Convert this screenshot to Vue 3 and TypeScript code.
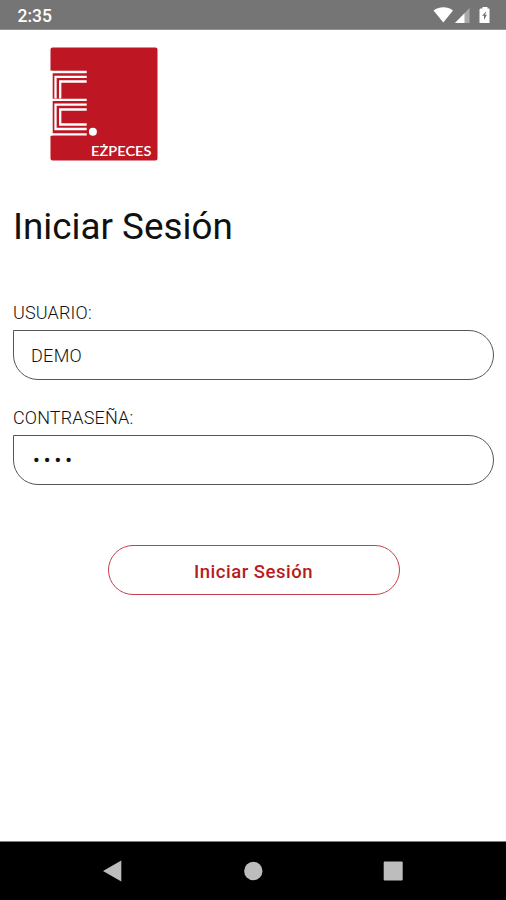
<script setup lang="ts">
import { ref } from 'vue'

const user = ref<string>('DEMO')
const password = ref<string>('••••')
</script>

<template>
  <div class="screen">
    <header class="status">
      <span class="clock">2:35</span>
      <svg class="status-icons" width="60" height="20" viewBox="0 0 60 20">
        <path d="M2.500 5.500C8.500 1.300 16.500 1.300 22 5.500L12.300 17.500Z" fill="#fff" />
        <path d="M38.500 3V18H24Z" fill="#a9a9a9" />
        <path d="M33.500 8.200V18H24Z" fill="#fff" />
        <path d="M49.500 3.500H51.500V2H56.500V3.500H58.500V18H48.500V4.500Z" fill="#fff" />
        <path d="M55.500 6L51 10.800H53V15L56 9.700H54Z" fill="#757575" />
      </svg>
    </header>

    <main class="content">
      <svg class="logo" width="108" height="115" viewBox="50 47 108 115">
        <rect x="50.500" y="47.500" width="107" height="113" rx="2" fill="#be1622" />
        <path d="M50 70.800H52.700V135.600H50Z" fill="#fff" />
        <g fill="none" stroke="#fff" stroke-width="2.300">
          <path d="M50 72H86.700M86.700 76.900H55.500V98.500M86.700 81.500H60.200V98.500" />
          <path d="M50 99.900H86.700M86.700 104.600H55.500V129H86.700M86.700 109.500H60.200V124.500H86.700M50 134.400H86.700" />
        </g>
        <circle cx="92.900" cy="131.700" r="4" fill="#fff" />
        <text class="brand" x="91" y="155.700" textLength="60.500" lengthAdjust="spacingAndGlyphs">EŻPECES</text>
      </svg>

      <h1 class="title">Iniciar Sesión</h1>

      <form class="form" @submit.prevent>
        <label class="label" for="user">USUARIO:</label>
        <input id="user" v-model="user" class="field" type="text" />
        <label class="label second" for="password">CONTRASEÑA:</label>
        <input id="password" v-model="password" class="field secret" type="text" />
        <button class="submit" type="submit">Iniciar Sesión</button>
      </form>
    </main>

    <nav class="navbar">
      <svg width="20" height="22" viewBox="0 0 20 22"><path d="M0 11L18.300 .5V21.500Z" fill="#bdbdbd" /></svg>
      <svg width="20" height="20" viewBox="0 0 20 20"><circle cx="10.300" cy="10" r="9.200" fill="#bdbdbd" /></svg>
      <svg width="20" height="20" viewBox="0 0 20 20"><rect x=".7" y=".5" width="19" height="19" rx="1" fill="#bdbdbd" /></svg>
    </nav>
  </div>
</template>

<style>
body {
  margin: 0;
  background: #fff;
}
</style>

<style scoped>
.screen {
  display: flex;
  flex-direction: column;
  height: 900px;
  box-sizing: border-box;
  background: #fff;
  color: #111;
  font-family: Roboto, "Liberation Sans", sans-serif;
}
.status {
  display: flex;
  justify-content: space-between;
  height: 30px;
  padding: 0 15px 0 17.500px;
  box-sizing: border-box;
  background: #757575;
  border-bottom: 1px solid #929292;
}
.clock {
  color: #fff;
  font-size: 17.500px;
  font-weight: 500;
  line-height: 32px;
}
.status-icons {
  margin-top: 5px;
}
.content {
  flex: 1;
  padding: 17px 12px 0 13px;
}
.logo {
  display: block;
  margin-left: 37px;
}
.brand {
  fill: #fff;
  font-family: Lato, sans-serif;
  font-size: 13px;
  font-weight: 600;
}
.title {
  margin: 41px 0 0;
  font-size: 36.800px;
  font-weight: 400;
  line-height: 48px;
}
.form {
  display: flex;
  flex-direction: column;
  margin-top: 50px;
}
.label {
  font-size: 18px;
  font-weight: 300;
  line-height: 24px;
  letter-spacing: 0.150px;
  margin-bottom: 5px;
}
.second {
  margin-top: 26px;
}
.field {
  height: 50px;
  box-sizing: border-box;
  padding: 0 17px;
  border: 1px solid #555;
  border-radius: 0 25px 25px 25px;
  background: #fff;
  color: #111;
  font: 300 18px Roboto, sans-serif;
  letter-spacing: 0.300px;
  outline: none;
}
.secret {
  padding: 1px 19px 0;
  font-weight: 500;
  font-size: 19px;
  letter-spacing: 4.100px;
}
.submit {
  align-self: center;
  width: 292px;
  height: 50px;
  margin-top: 60px;
  padding-top: 4px;
  border: 1px solid #c4404c;
  border-radius: 25px;
  background: #fff;
  color: #b71c1c;
  font: 500 18.500px Roboto, sans-serif;
  letter-spacing: 0.520px;
}
.navbar {
  display: flex;
  align-items: center;
  justify-content: space-between;
  height: 59px;
  padding: 0 103px;
  box-sizing: border-box;
  background: #000;
  border-top: 1px solid #808080;
}
</style>
